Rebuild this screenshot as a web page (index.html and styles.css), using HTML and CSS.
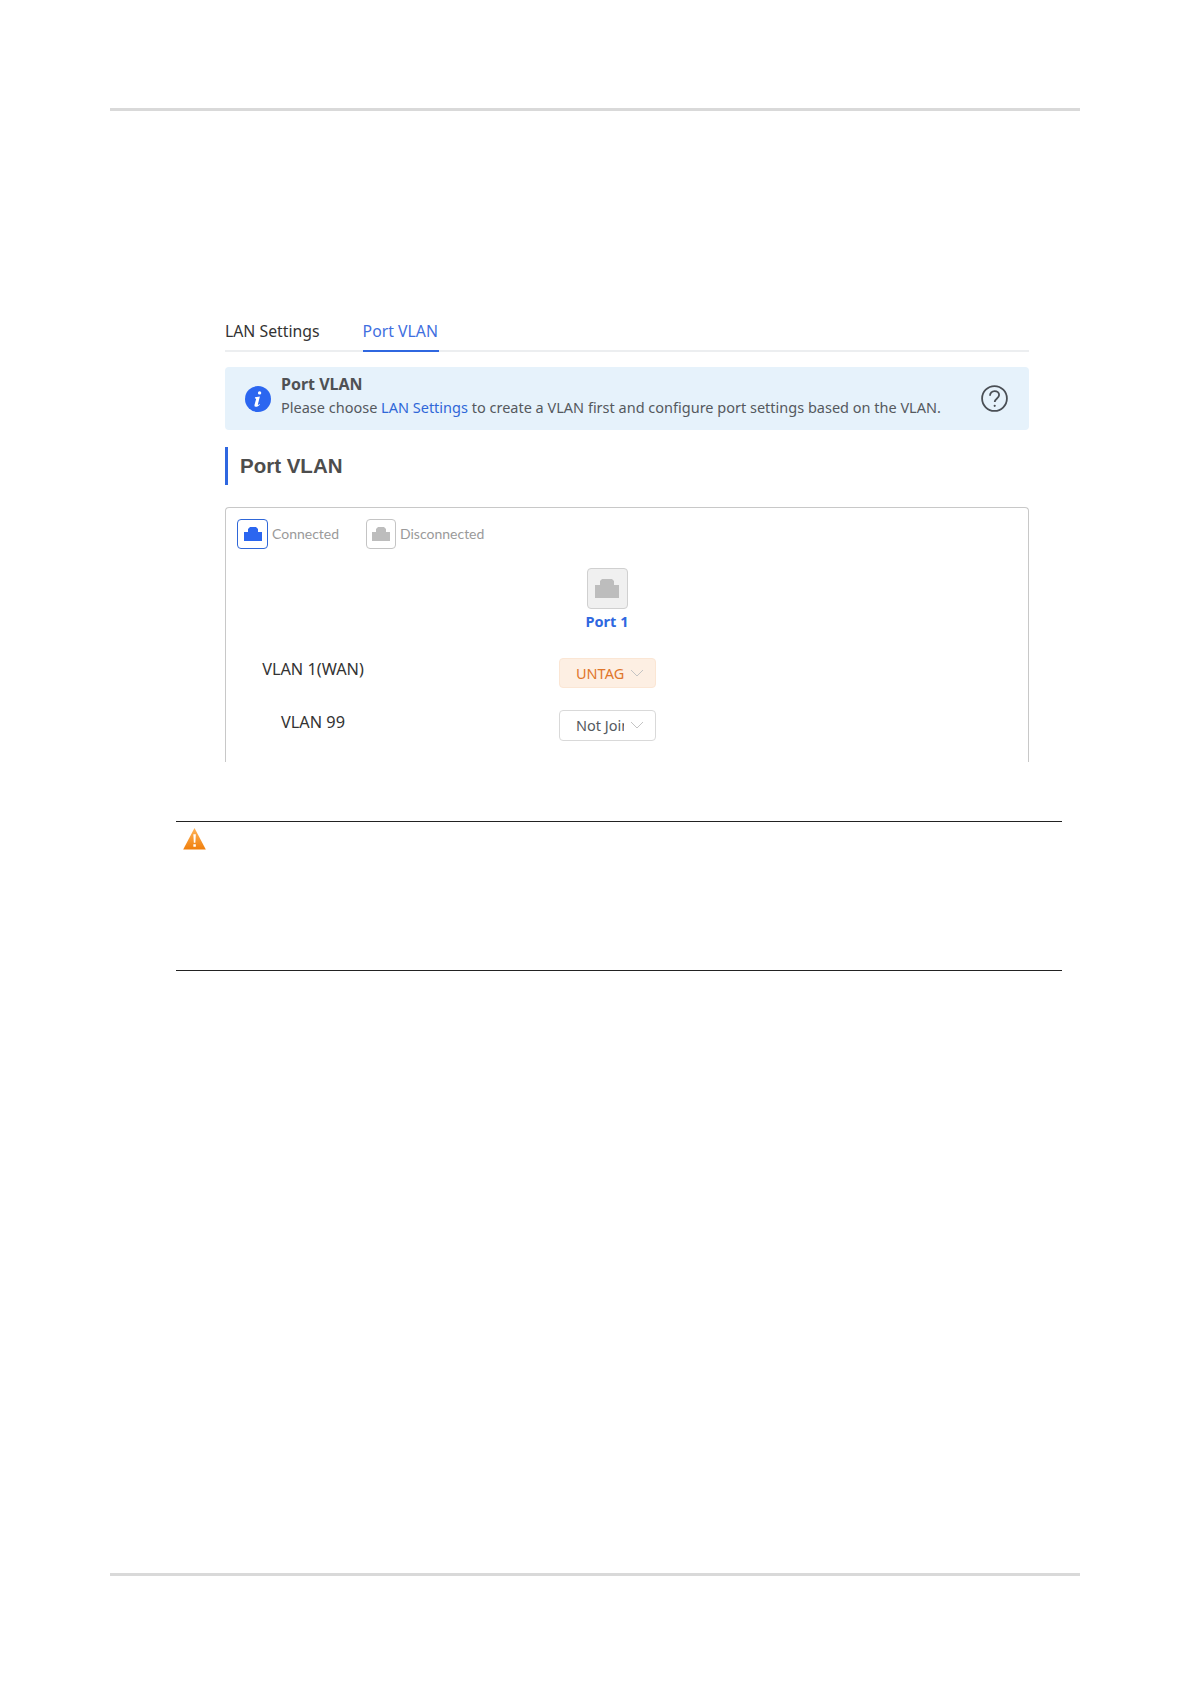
FILE: index.html
```html
<!DOCTYPE html>
<html lang="en">
<head>
<meta charset="utf-8">
<title>Port VLAN</title>
<link rel="stylesheet" href="styles.css">
</head>
<body>
<div class="page">
  <div class="rule"></div>
  <section class="figure">
    <nav class="tabs">
      <span class="tab">LAN Settings</span>
      <span class="tab active">Port VLAN</span>
    </nav>
    <div class="alert">
      <svg class="info-icon" viewBox="0 0 26 26"><circle cx="13" cy="13" r="13" fill="#2b66f0"/><path d="M14.600 5.200a1.700 1.700 0 1 1 0 3.400 1.700 1.700 0 0 1 0-3.400zM10 11.300l4.900-.7-2 7.600c-.2.700.4.800 1.700-.3l.4.600c-1.600 1.700-3.100 2.500-4.300 2.300-1.200-.2-1.400-1.100-1.100-2.200l1.400-5.200c.2-.8-.2-1-1.100-.9z" fill="#fff"/></svg>
      <div class="alert-body">
        <div class="alert-title">Port VLAN</div>
        <div class="alert-text">Please choose <span class="link">LAN Settings</span> to create a VLAN first and configure port settings based on the VLAN.</div>
      </div>
      <svg class="help-icon" viewBox="0 0 27 27" fill="none" stroke="#4a4f55"><circle cx="13.500" cy="13.500" r="12.400" stroke-width="1.800"/><path d="M9 10.800c0-2.900 2-4.700 4.600-4.700s4.500 1.700 4.500 4c0 3.300-4.400 3.400-4.400 7" stroke-width="1.800"/><circle cx="13.700" cy="20.800" r="1.100" fill="#4a4f55" stroke="none"/></svg>
    </div>
    <h2 class="section-title">Port VLAN</h2>
    <div class="card">
      <div class="legend">
        <span class="legend-icon on"><svg class="jack" viewBox="0 0 18 14"><path d="M0 14V5h4V2l2-2h6l2 2v3h4v9z" fill="#2b66f0"/></svg></span>
        <span class="legend-label first">Connected</span>
        <span class="legend-icon"><svg class="jack" viewBox="0 0 18 14"><path d="M0 14V5h4V2l2-2h6l2 2v3h4v9z" fill="#bdbdbd"/></svg></span>
        <span class="legend-label">Disconnected</span>
      </div>
      <div class="port">
        <span class="port-icon"><svg class="jack-large" viewBox="0 0 24 19"><path d="M0 19V6h5V2l2-2h10l2 2v4h5v13z" fill="#bdbdbd"/></svg></span>
        <span class="port-name">Port 1</span>
      </div>
      <div class="vlan-row first-row">
        <span class="vlan-label">VLAN 1(WAN)</span>
        <span class="select untag"><span class="select-value">UNTAG</span><svg class="chev" viewBox="0 0 14 8" fill="none" stroke="#c4c4c4"><path d="M1 1l6 6 6-6"/></svg></span>
      </div>
      <div class="vlan-row second-row">
        <span class="vlan-label">VLAN 99</span>
        <span class="select"><span class="select-value">Not Join</span><svg class="chev" viewBox="0 0 14 8" fill="none" stroke="#c4c4c4"><path d="M1 1l6 6 6-6"/></svg></span>
      </div>
    </div>
  </section>
  <section class="caution">
    <svg class="warn-icon" viewBox="0 0 24 24"><defs><linearGradient id="warn" x1="0" y1="0" x2="0" y2="1"><stop offset="0" stop-color="#ffb45a"/><stop offset="1" stop-color="#f07f0c"/></linearGradient></defs><path d="M12 0.500L23.800 23H0.200z" fill="url(#warn)"/><path d="M10.800 7h2.600l-.5 9h-1.600zM10.800 17.500h2.600V20h-2.600z" fill="#fff"/></svg>
  </section>
  <div class="rule bottom-rule"></div>
</div>
</body>
</html>
```
FILE: styles.css
```css
* { box-sizing: border-box; }
html, body { margin: 0; background: #fff; }
body { font-family: "Noto Sans", "Open Sans", sans-serif; color: #333; }
.page { width: 1191px; height: 1684px; padding: 108px 111px 0 110px; }
.rule { height: 3px; background: #d9d9d9; }
.bottom-rule { margin-top: 602px; }
.figure { margin-top: 206px; margin-left: 115px; width: 804px; }
.tabs { display: flex; gap: 42px; height: 35px; border-bottom: 2px solid #eceef0; align-items: flex-start; }
.tab { font-size: 15.800px; line-height: 22px; height: 35px; padding: 3px 1px 0 0; color: #333; white-space: nowrap; }
.tab.active { color: #3f6fe0; border-bottom: 2px solid #2f67e0; }
.alert { margin-top: 15px; height: 63px; background: #e6f2fb; border-radius: 4px; display: flex; align-items: center; padding: 0 21px 0 20px; }
.info-icon { width: 26px; height: 26px; flex: none; }
.alert-body { margin-left: 10px; flex: 1; padding-bottom: 5px; color: #55595e; }
.alert-title { font-size: 16px; font-weight: 700; line-height: 22px; margin-bottom: 1px; color: #4f5154; }
.alert-text { font-size: 14.500px; line-height: 23px; white-space: nowrap; }
.link { color: #2f67d8; }
.help-icon { width: 27px; height: 27px; flex: none; }
.section-title { margin: 17px 0 0; height: 38px; border-left: 3px solid #2f67e0; padding-left: 12px; font: 700 20.500px/38px "Liberation Sans", Arial, sans-serif; color: #4d4d4d; }
.card { margin-top: 22px; height: 255px; border: 1px solid #c8c8c8; border-bottom: 0; border-radius: 4px 4px 0 0; overflow: hidden; }
.legend { display: flex; align-items: center; padding: 10px 0 0 11px; height: 42px; }
.legend-icon { width: 30px; height: 30px; border: 1px solid #c4c4c4; border-radius: 4px; display: flex; align-items: center; justify-content: center; flex: none; }
.legend-icon.on { width: 31px; border-color: #2f67d8; }
.jack { width: 18px; height: 14px; }
.legend-label { margin-left: 4px; font: 14px/18px Lato, "Noto Sans", sans-serif; color: #9a9a9a; white-space: nowrap; }
.legend-label.first { width: 94px; }
.port { display: flex; flex-direction: column; align-items: center; width: 42px; margin: 18px 0 0 360px; }
.port-icon { width: 41px; height: 41px; background: #f0f0f0; border: 1px solid #d0d0d0; border-radius: 4px; display: flex; align-items: center; justify-content: center; }
.jack-large { width: 24px; height: 19px; }
.port-name { margin-top: 1px; font-size: 14.500px; font-weight: 700; line-height: 22px; color: #2f67e0; white-space: nowrap; }
.vlan-row { display: flex; align-items: flex-start; }
.first-row { margin-top: 26px; }
.second-row { margin-top: 22px; }
.second-row .vlan-label { padding-top: 1px; }
.vlan-label { width: 174px; margin-right: 159px; text-align: center; font-size: 16.300px; line-height: 22px; color: #333; white-space: nowrap; }
.select { width: 97px; height: 31px; border: 1px solid #d9d9d9; border-radius: 4px; display: flex; align-items: center; padding: 0 0 1px 16px; background: #fff; }
.select.untag { height: 30px; padding-bottom: 0; background: #fdefe3; border-color: #fbe6d4; }
.select-value { width: 48px; overflow: hidden; font-size: 14.500px; line-height: 20px; color: #55595e; white-space: nowrap; flex: none; }
.untag .select-value { color: #e0762b; }
.chev { width: 14px; height: 8px; margin-left: 6px; flex: none; }
.caution { margin: 59px 0 0 66px; width: 886px; height: 150px; border-top: 1px solid #222; border-bottom: 1px solid #222; padding: 5px 0 0 7px; }
.warn-icon { display: block; width: 23px; height: 24px; }
```
